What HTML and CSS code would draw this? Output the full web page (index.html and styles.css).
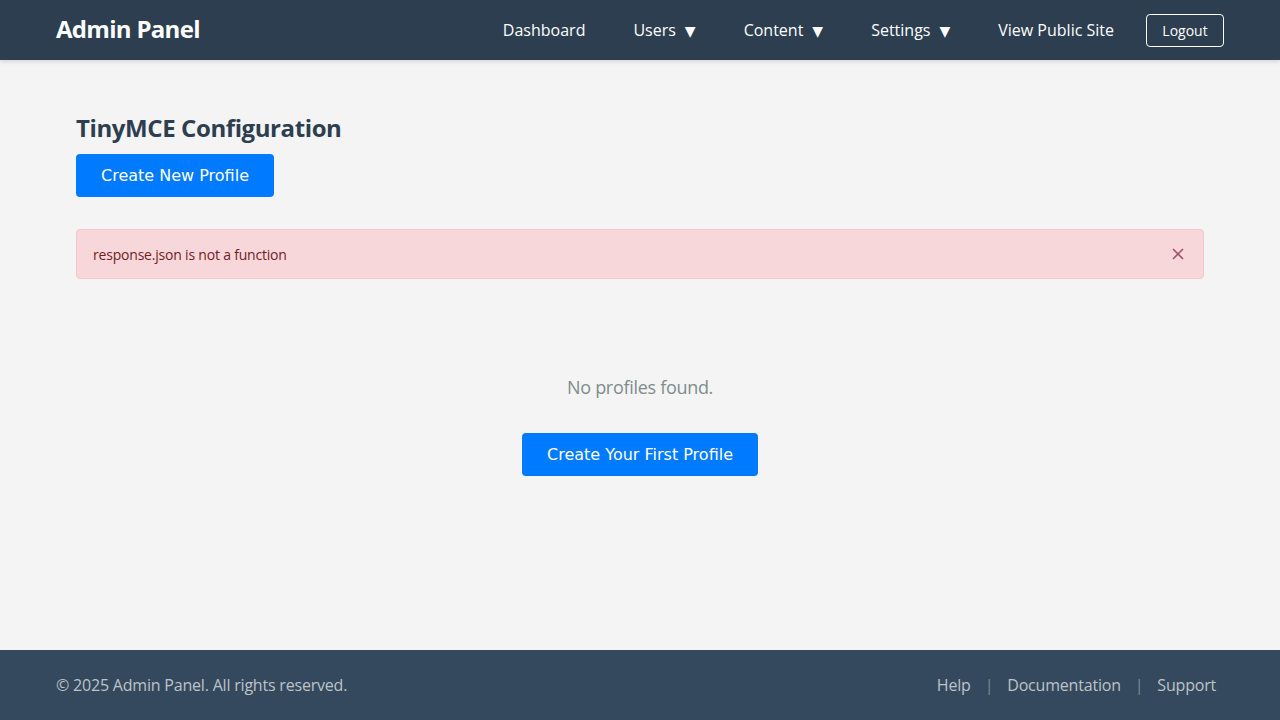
FILE: index.html
```html
<!DOCTYPE html>
<html lang="en">
<head>
<meta charset="utf-8">
<title>Admin Panel</title>
<link rel="stylesheet" href="styles.css">
</head>
<body>
<div class="app">
  <header class="topbar">
    <div class="topbar-inner">
      <div class="brand">Admin Panel</div>
      <nav class="nav">
        <a class="nav-link">Dashboard</a>
        <a class="nav-link">Users<span class="caret">▼</span></a>
        <a class="nav-link">Content<span class="caret">▼</span></a>
        <a class="nav-link">Settings<span class="caret">▼</span></a>
        <a class="nav-link">View Public Site</a>
        <button class="logout">Logout</button>
      </nav>
    </div>
  </header>
  <main class="main">
    <div class="content">
      <h2 class="page-title">TinyMCE Configuration</h2>
      <button class="btn-primary">Create New Profile</button>
      <div class="alert">
        <span>response.json is not a function</span>
        <span class="alert-close">
          <svg width="12" height="12" viewBox="0 0 12 12"><path d="M1 1L11 11M11 1L1 11" stroke="#a05360" stroke-width="1.6" fill="none"/></svg>
        </span>
      </div>
      <div class="empty">
        <p class="empty-text">No profiles found.</p>
        <button class="btn-primary">Create Your First Profile</button>
      </div>
    </div>
  </main>
  <footer class="footer">
    <div class="footer-inner">
      <span class="copyright">© 2025 Admin Panel. All rights reserved.</span>
      <div class="footer-links">
        <a>Help</a><span class="sep">|</span><a>Documentation</a><span class="sep">|</span><a>Support</a>
      </div>
    </div>
  </footer>
</div>
</body>
</html>
```
FILE: styles.css
```css
* { box-sizing: border-box; }
html, body { margin: 0; padding: 0; }
body {
  font-family: "Open Sans", "Noto Sans", "DejaVu Sans", sans-serif;
  background: #f4f4f4;
  color: #2c3e50;
}
.app { display: flex; flex-direction: column; min-height: 720px; }
.topbar {
  background: #2c3e50;
  height: 60px;
  box-shadow: 0 2px 4px rgba(0,0,0,0.12);
  position: relative;
  z-index: 1;
}
.topbar-inner {
  max-width: 1200px;
  margin: 0 auto;
  padding: 0 16px;
  height: 60px;
  display: flex;
  align-items: center;
  justify-content: space-between;
}
.brand { color: #fff; font-size: 24px; font-weight: 700; letter-spacing: -0.7px; margin-bottom: 3px; }
.nav { display: flex; align-items: center; gap: 48px; }
.nav-link { color: #fff; font-size: 16px; letter-spacing: 0; }
.caret { font-size: 14px; font-family: "DejaVu Sans", sans-serif; margin-left: 9px; }
.logout {
  margin-left: -16px;
  background: transparent;
  border: 1px solid #fff;
  color: #fff;
  border-radius: 4px;
  height: 33px;
  width: 78px;
  font-family: "Open Sans", sans-serif;
  font-size: 14px;
}
.main { flex: 1; }
.content { max-width: 1168px; margin: 0 auto; padding: 52px 20px 0; }
.page-title { margin: 0 0 10px; font-size: 24px; font-weight: 700; line-height: 32px; letter-spacing: -0.4px; }
.btn-primary {
  background: #007bff;
  color: #fff;
  border: none;
  border-radius: 4px;
  font-family: "DejaVu Sans", sans-serif;
  font-size: 16px;
  height: 43px;
  padding: 0 25px;
}
.alert {
  margin-top: 32px;
  background: #f8d7da;
  border: 1px solid #f5c6cb;
  border-radius: 4px;
  color: #721c24;
  font-size: 14px;
  letter-spacing: -0.2px;
  height: 50px;
  padding: 0 19px 0 16px;
  display: flex;
  align-items: center;
  justify-content: space-between;
}
.alert-close { display: flex; }
.empty { display: flex; flex-direction: column; align-items: center; padding-top: 96px; }
.empty-text { margin: 0 0 34px; color: #7f8c8d; font-size: 18px; line-height: 24px; letter-spacing: -0.3px; }
.footer { background: #34495e; height: 70px; color: #bdc3c7; font-size: 16px; }
.footer-inner {
  max-width: 1200px;
  margin: 0 auto;
  padding: 0 16px;
  height: 70px;
  display: flex;
  align-items: center;
  justify-content: space-between;
}
.copyright { letter-spacing: -0.2px; }
.footer-links { display: flex; align-items: center; gap: 14px; padding-right: 8px; letter-spacing: -0.2px; }
.sep { color: #7f8c8d; }
```
